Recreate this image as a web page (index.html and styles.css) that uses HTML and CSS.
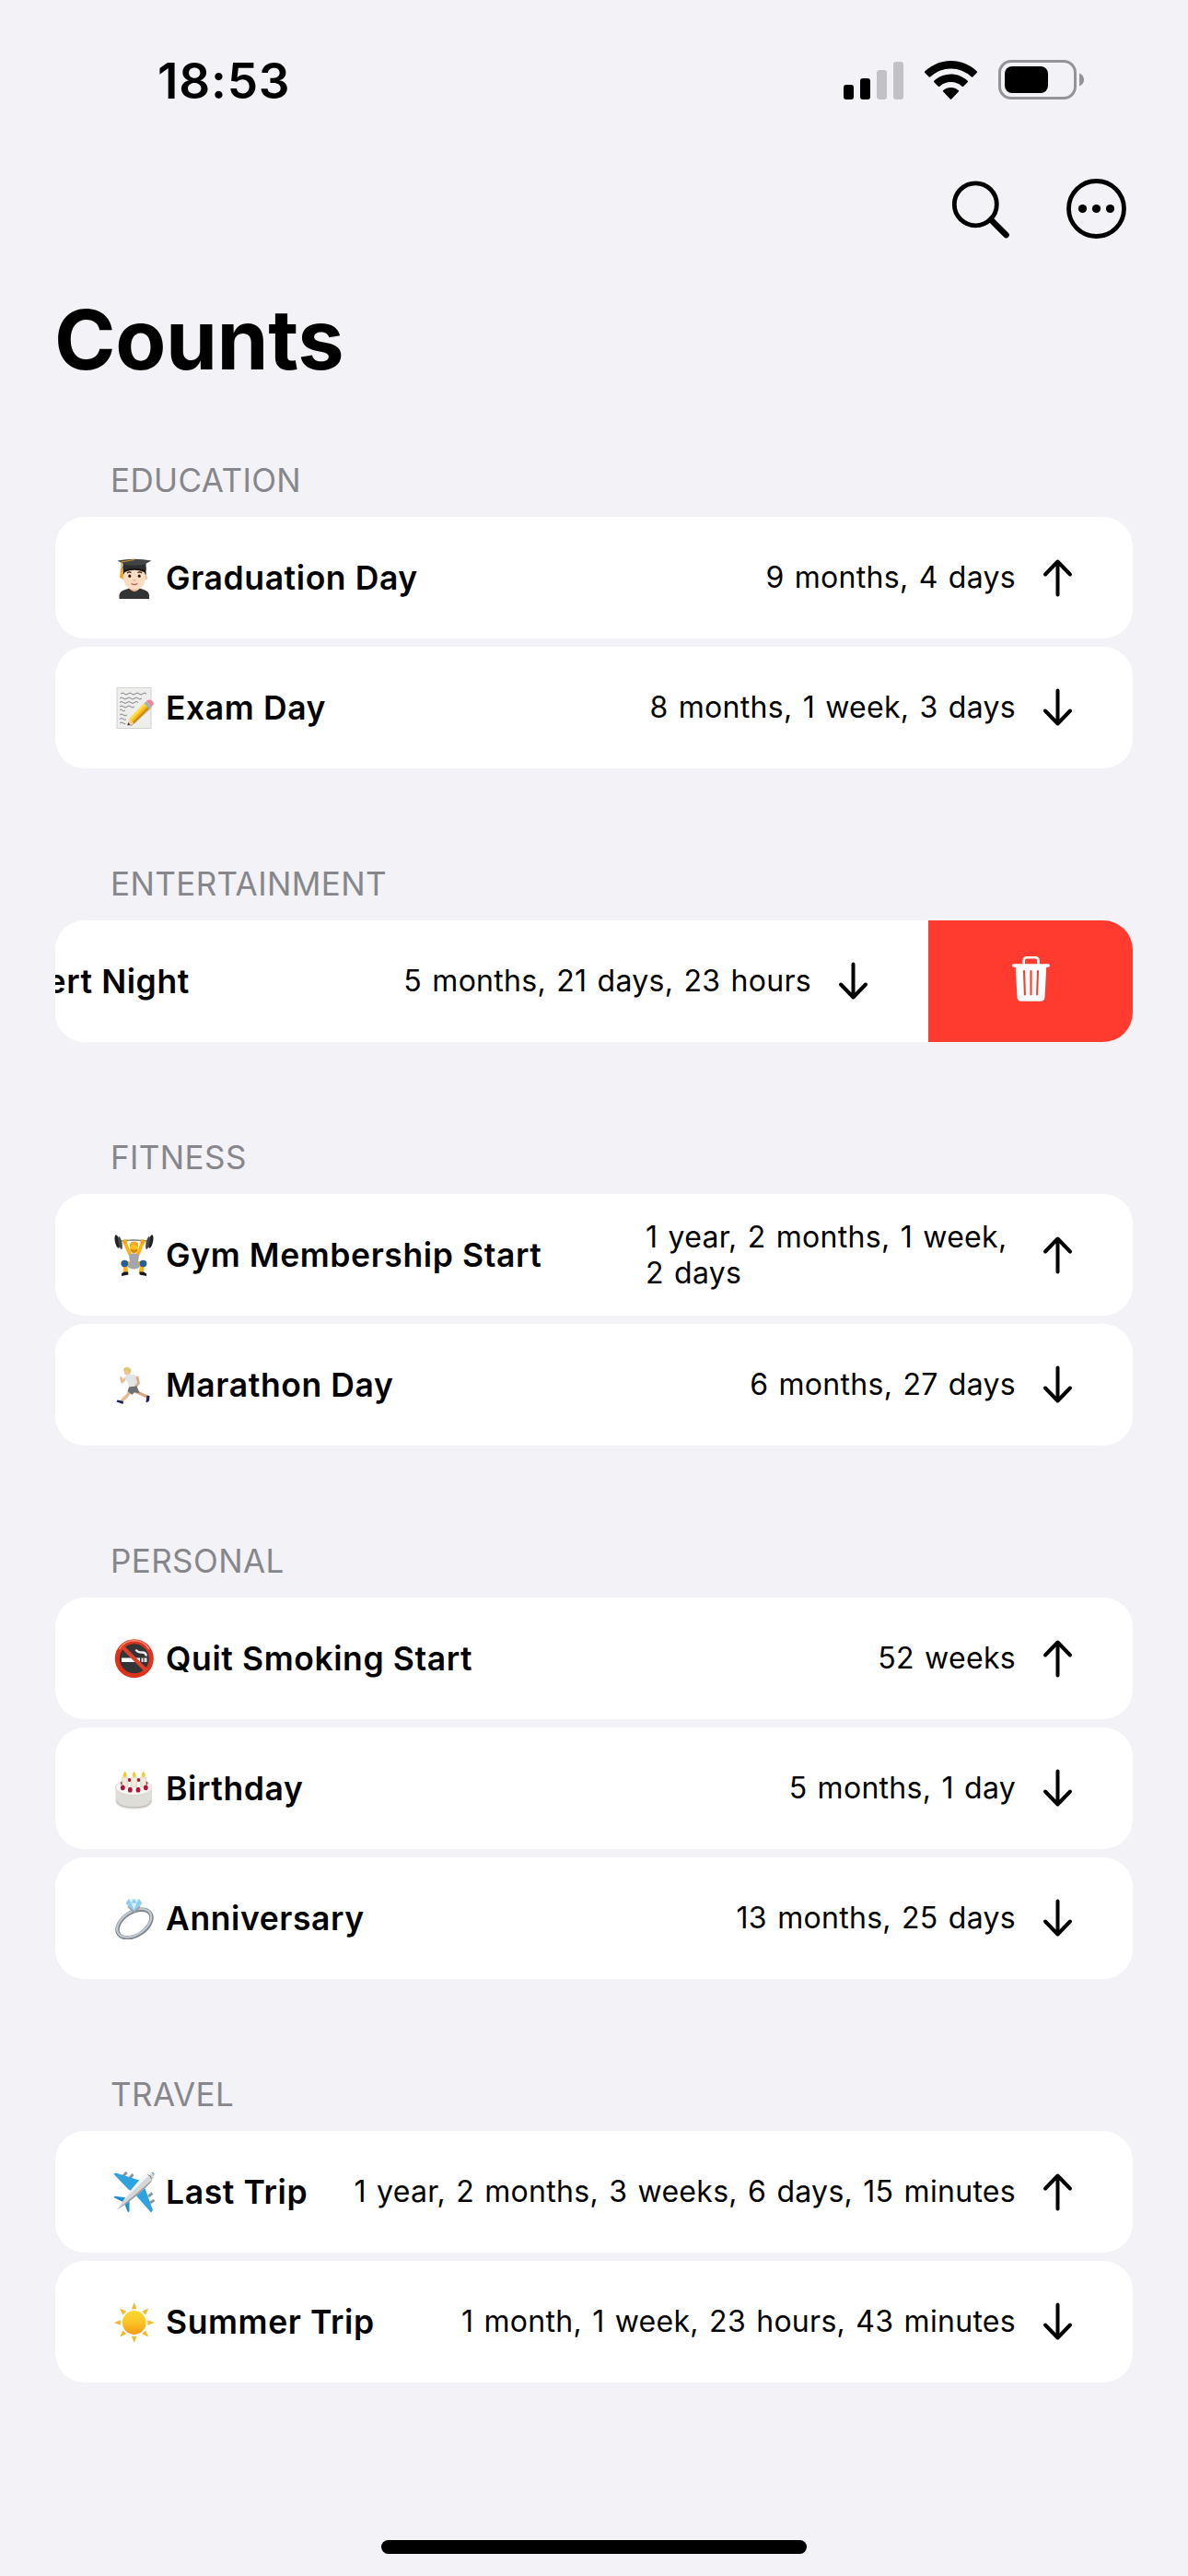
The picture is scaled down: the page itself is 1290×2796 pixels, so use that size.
FILE: index.html
```html
<!DOCTYPE html>
<html lang="en">

<head>
    <meta charset="utf-8" />
    <title>Counts</title>
    <link rel="stylesheet" href="styles.css">
</head>

<body>
    <!-- shared arrows -->
    <svg class="defs" width="0" height="0">
        <symbol id="arrow-up" viewBox="0 0 37 42">
            <path d="M18.5 39.5V4M5 17.5L18.5 3.5L32 17.5" />
        </symbol>
        <symbol id="arrow-down" viewBox="0 0 37 42">
            <path d="M18.5 2.5V38M5 24.5L18.5 38.5L32 24.5" />
        </symbol>
    </svg>

    <div class="status-bar">
        <span class="time">18:53</span>
        <div class="status-icons">
            <svg width="65" height="42" viewBox="0 0 65 42">
                <rect x="0" y="26" width="11" height="16" rx="3" />
                <rect x="18" y="19" width="11" height="23" rx="3" />
                <rect x="36" y="10" width="11" height="32" rx="3" fill="#c2c1c6" />
                <rect x="54" y="1" width="11" height="41" rx="3" fill="#c2c1c6" />
            </svg>
            <svg width="57" height="42" viewBox="0 0 57 42">
                <path d="M28.5 0C39.500 0 49.500 4.300 56.600 11.300Q57.500 12.200 56.700 13L52.300 17.400Q51.500 18.200 50.600 17.300A32 32 0 0 0 6.400 17.300Q5.500 18.200 4.700 17.400L.3 13Q-.5 12.200 .4 11.300C7.500 4.300 17.500 0 28.500 0Z" />
                <path d="M28.500 14.500C35.500 14.500 41.800 17.200 46.500 21.600Q47.400 22.500 46.600 23.300L42.200 27.700Q41.400 28.500 40.500 27.700A17.800 17.800 0 0 0 16.500 27.700Q15.600 28.500 14.800 27.700L10.400 23.300Q9.600 22.500 10.500 21.600C15.200 17.200 21.500 14.500 28.500 14.500Z" />
                <path d="M28.500 29C31.600 29 34.500 30.100 36.700 32Q37.600 32.800 36.800 33.600L29.300 41.400Q28.500 42.200 27.700 41.400L20.200 33.600Q19.400 32.800 20.300 32C22.500 30.100 25.400 29 28.500 29Z" />
            </svg>
            <svg width="93" height="43" viewBox="0 0 93 43">
                <rect x="1.500" y="1.500" width="82" height="40" rx="12.500" fill="none" stroke="#949397" stroke-width="3" />
                <rect x="7" y="7" width="47" height="29" rx="8" />
                <path d="M88 14.500C91.300 15.800 93 18.300 93 21.500S91.300 27.200 88 28.500Z" fill="#949397" />
            </svg>
        </div>
    </div>

    <div class="toolbar">
        <svg width="64" height="64" viewBox="0 0 64 64">
            <circle cx="26.300" cy="26.800" r="23" fill="none" stroke="#000" stroke-width="4.800" />
            <path d="M43 43.500L59.500 60" stroke="#000" stroke-width="6.600" stroke-linecap="round" />
        </svg>
        <svg width="65" height="65" viewBox="0 0 65 65">
            <circle cx="32.500" cy="32.500" r="30" fill="none" stroke="#000" stroke-width="4.800" />
            <circle cx="17.500" cy="32.500" r="4.600" />
            <circle cx="32.500" cy="32.500" r="4.600" />
            <circle cx="47.500" cy="32.500" r="4.600" />
        </svg>
    </div>

    <h1>Counts</h1>

    <section>
        <h2>EDUCATION</h2>
        <div class="card">
            <!-- graduate -->
            <svg class="emoji" viewBox="0 0 45 45">
                <path d="M6.500 45V41Q7 36.500 13 35L19 33H27L33 35Q38.500 36.500 39 41V45Z" fill="#333436" />
                <path d="M17.500 30H28.500V34Q23 40.500 17.500 34Z" fill="#e5b592" />
                <circle cx="11.500" cy="22" r="2.500" fill="#eec3a0" />
                <circle cx="34.500" cy="22" r="2.500" fill="#eec3a0" />
                <path d="M11.500 11H34.500V23Q34 35 23 35Q12 35 11.500 23Z" fill="#fadcc2" />
                <path d="M10.500 10H35.500V20L33.500 16Q23 11.500 12.500 16L10.500 20Z" fill="#1d1713" />
                <path d="M15 17Q17.500 15 19.500 16.500M26.500 16.500Q29 15 31 17" stroke="#2b1b12" stroke-width="1.100" fill="none" />
                <ellipse cx="17.800" cy="20.200" rx="1.500" ry="1.800" fill="#2b1b12" />
                <ellipse cx="28.200" cy="20.200" rx="1.500" ry="1.800" fill="#2b1b12" />
                <path d="M21.500 25H24.500" stroke="#e0a98a" stroke-width="1.400" />
                <path d="M19.500 28.500Q23 30.500 26.500 28.500" stroke="#a8533f" stroke-width="1.300" fill="none" />
                <path d="M10.500 6H35.500V14Q23 9.500 10.500 14Z" fill="#2c2e30" />
                <path d="M4.500 3.500Q23 0 41.500 3.500L34 7.500Q23 10 12 7.500Z" fill="#424548" />
                <path d="M23 2.500L9 5V13" stroke="#d18f24" stroke-width="1.200" fill="none" />
                <path d="M8 12H10.500L11 22Q9 23.500 7 22Z" fill="#eba62f" />
            </svg>
            <span class="name">Graduation Day</span>
            <span class="count">9 months, 4 days</span>
            <svg class="arrow"><use href="#arrow-up" /></svg>
        </div>
        <div class="card">
            <!-- memo -->
            <svg class="emoji" viewBox="0 0 45 45">
                <rect x="4" y=".5" width="37" height="44" fill="#eeeeed" stroke="#d2d2d2" />
                <path d="M8 7q2-2 4 0t4 0 4 0 4 0 4 0 4 0 4 0M7 12q2-2 4 0t4 0 4 0 4 0 4 0 4 0M7 16.500q2-2 4 0t4 0 4 0 4 0 4 0M7 21q2-2 4 0t4 0 4 0 4 0M7 25q1.500-2 3 0t3 0M7 30q2-2 4 0t4 0M7 34.500q2-2 4 0t3 0M7 39q2-2 4 0t2 0" fill="none" stroke="#77777a" stroke-width=".9" />
                <path d="M16.500 42L38 20L44 18L40 24L20 42Z" fill="#000" opacity=".22" />
                <path d="M15.300 41.500L17.500 34L22.500 39.500Z" fill="#edcf9d" />
                <path d="M15.300 41.500L16.200 38.300L18.300 40.600Z" fill="#333" />
                <path d="M17.500 34L33.500 17.500L39 23L22.500 39.500Z" fill="#f8bd19" />
                <path d="M17.500 34L33.500 17.500L35.300 19.300L19.200 36Z" fill="#ffdc4c" />
                <path d="M20.900 37.800L37.200 21.200L39 23L22.500 39.500Z" fill="#d28b10" />
                <path d="M33.500 17.500L36 15L41.500 20.500L39 23Z" fill="#a5b0b8" />
                <path d="M36 15Q38.500 12.500 41.500 14.300T43.500 18.500L41.500 20.500Z" fill="#f08291" />
            </svg>
            <span class="name">Exam Day</span>
            <span class="count">8 months, 1 week, 3 days</span>
            <svg class="arrow"><use href="#arrow-down" /></svg>
        </div>
    </section>

    <section>
        <h2>ENTERTAINMENT</h2>
        <!-- row swiped open -->
        <div class="swipe">
            <div class="card">
                <span class="emoji"></span>
                <span class="name">Concert Night</span>
                <span class="count">5 months, 21 days, 23 hours</span>
                <svg class="arrow"><use href="#arrow-down" /></svg>
            </div>
            <div class="delete">
                <svg width="41" height="49" viewBox="0 0 41 49">
                    <path d="M12.700 9V4.500Q12.700 1.300 16 1.300H25.200Q28.500 1.300 28.500 4.500V9" fill="none" stroke="#fff" stroke-width="2.600" />
                    <rect x="0" y="8.300" width="41" height="3.500" rx="1.700" fill="#fff" />
                    <path d="M3.700 10H37.300L35.500 44.500Q35.200 48.700 31 48.700H10Q5.800 48.700 5.500 44.500Z" fill="#fff" />
                    <path d="M13 16L13.900 41.500M20.500 16V41.500M28 16L27.100 41.500" stroke="#ff3b30" stroke-width="2.100" stroke-linecap="round" />
                </svg>
            </div>
        </div>
    </section>

    <section>
        <h2>FITNESS</h2>
        <div class="card">
            <!-- weight lifter -->
            <svg class="emoji" viewBox="0 0 45 45">
                <path d="M5 7.500Q22 4.500 40 7.500" stroke="#777b80" stroke-width="1.300" fill="none" />
                <path d="M12.500 8.500L18.500 22M32 8.500L26.500 22" stroke="#fbb414" stroke-width="3.800" stroke-linecap="round" />
                <ellipse cx="4.300" cy="7.500" rx="2.400" ry="7.400" transform="rotate(-12 4.300 7.500)" fill="#202326" />
                <ellipse cx="7.500" cy="9" rx="1.900" ry="7.200" transform="rotate(-12 7.500 9)" fill="#44484c" />
                <ellipse cx="40.700" cy="7.500" rx="2.400" ry="7.400" transform="rotate(12 40.700 7.500)" fill="#202326" />
                <ellipse cx="37.500" cy="9" rx="1.900" ry="7.200" transform="rotate(12 37.500 9)" fill="#44484c" />
                <circle cx="12.700" cy="7.800" r="2.500" fill="#f2a611" />
                <circle cx="32" cy="7.800" r="2.500" fill="#f2a611" />
                <path d="M20 32L12.500 31L14 42M25 32L32 31L30 42" stroke="#fbb414" stroke-width="4.800" fill="none" stroke-linejoin="round" />
                <path d="M17 22Q22.500 18.500 28 22L27 30L29 35Q22.500 40 15.500 35L18 30Z" fill="#a4a6aa" />
                <ellipse cx="22.400" cy="14" rx="4.400" ry="5.800" fill="#fcc21b" />
                <path d="M18 14Q16.500 8 22.500 7.500T27 14Q25 10.500 22 11T18 14Z" fill="#f5a623" />
                <path d="M18.500 15.500Q22.500 17.500 26.500 15.500Q26 20 22.500 20T18.500 15.500Z" fill="#d9860c" />
                <ellipse cx="12.300" cy="31.500" rx="3.900" ry="3.700" fill="#285f9a" />
                <ellipse cx="32.500" cy="31.500" rx="3.900" ry="3.700" fill="#285f9a" />
                <path d="M11.500 40.500H16L16.500 43.500L9 45V42.500ZM28.500 40.500H33L36 42.500V45L28.500 43.500Z" fill="#17191c" />
            </svg>
            <span class="name">Gym Membership Start</span>
            <span class="count multi">1 year, 2 months, 1 week, 2 days</span>
            <svg class="arrow"><use href="#arrow-up" /></svg>
        </div>
        <div class="card">
            <!-- runner -->
            <svg class="emoji" viewBox="0 0 45 45">
                <path d="M26 30L35.500 34.500" stroke="#dba87f" stroke-width="3.400" stroke-linecap="round" />
                <path d="M18.500 29L14.500 34.500L9 39.500" stroke="#e9ba92" stroke-width="3.600" stroke-linecap="round" fill="none" />
                <path d="M15 13.500L9.500 19L8.300 14.500" stroke="#e9ba92" stroke-width="2.600" stroke-linecap="round" stroke-linejoin="round" fill="none" />
                <path d="M14 11.500Q22 9 26.500 14L25.500 25L17 26.500Q17 19 12.500 16Z" fill="#e2e3e7" />
                <path d="M26 14L27.500 20L24 24.500" stroke="#dba87f" stroke-width="2.700" stroke-linecap="round" stroke-linejoin="round" fill="none" />
                <path d="M17 24.500L25.500 23.500L28.500 31L22.500 30.500L20.500 33L15.500 29Z" fill="#6d6f73" />
                <ellipse cx="15" cy="7.500" rx="3.400" ry="4" fill="#f0c6a0" />
                <path d="M11 6.500Q10.500 3 15 3T19.300 6.500Q19.300 10 17.500 11Q17 7 11 6.500Z" fill="#ddca77" />
                <path d="M4.500 38.500L11 40L10.500 43L3.500 40.500ZM36.500 33.500L39.500 34L39 39.500L36 41.500L35.500 40Z" fill="#1c2463" />
            </svg>
            <span class="name">Marathon Day</span>
            <span class="count">6 months, 27 days</span>
            <svg class="arrow"><use href="#arrow-down" /></svg>
        </div>
    </section>

    <section>
        <h2>PERSONAL</h2>
        <div class="card">
            <!-- no smoking -->
            <svg class="emoji" viewBox="0 0 45 45">
                <circle cx="22.800" cy="22.200" r="18.500" fill="#333436" stroke="#dd321b" stroke-width="5" />
                <path d="M6.500 12A19 19 0 0 1 39 12" fill="none" stroke="#f28a75" stroke-width="1.500" />
                <rect x="9" y="21.500" width="20" height="4.500" fill="#fff" />
                <path d="M30.500 21.500H32.500V26H30.500ZM33.500 21.500H36.500V26H33.500Z" fill="#e2e2e2" />
                <path d="M35.500 19.500Q36 15.500 31 15.500T24.500 12.500" fill="none" stroke="#eee" stroke-width="2.500" />
                <path d="M9.500 9L36 35.500" stroke="#dc4029" stroke-width="4.200" />
            </svg>
            <span class="name">Quit Smoking Start</span>
            <span class="count">52 weeks</span>
            <svg class="arrow"><use href="#arrow-up" /></svg>
        </div>
        <div class="card">
            <!-- cake -->
            <svg class="emoji" viewBox="0 0 45 45">
                <path d="M2.500 21V37Q5 44.500 22.500 44.500T42 37V21Z" fill="#dfddd8" />
                <path d="M3.500 35.500Q6 42.800 22.500 42.800T41 35.500" stroke="#bbb8b0" stroke-width="1" fill="none" />
                <ellipse cx="22.300" cy="21" rx="19.900" ry="8.600" fill="#f7f6f3" stroke="#d4d1cb" stroke-width=".8" />
                <circle cx="10" cy="16.500" r="1.900" fill="#a51439" />
                <circle cx="17.500" cy="13" r="2" fill="#a51439" />
                <circle cx="27.500" cy="13" r="2" fill="#a51439" />
                <circle cx="35.500" cy="16.500" r="1.900" fill="#a51439" />
                <path d="M9.700 10H15.700V20Q12.700 22 9.700 20ZM19.700 10H25.700V20Q22.700 22 19.700 20ZM29.700 10H35.700V20Q32.700 22 29.700 20Z" fill="#eeebdb" stroke="#ccc8b5" stroke-width=".6" />
                <path d="M12.700 3.500Q17 9 12.700 10.300Q8.400 9 12.700 3.500ZM22.700 3.500Q27 9 22.700 10.300Q18.400 9 22.700 3.500ZM32.700 3.500Q37 9 32.700 10.300Q28.400 9 32.700 3.500Z" fill="#f0cd3c" />
                <ellipse cx="10.300" cy="21.300" rx="2.400" ry="2.900" fill="#b80f3b" />
                <ellipse cx="18.300" cy="23.700" rx="2.400" ry="2.900" fill="#b80f3b" />
                <ellipse cx="27" cy="23.700" rx="2.400" ry="2.900" fill="#b80f3b" />
                <ellipse cx="35.300" cy="21.300" rx="2.400" ry="2.900" fill="#b80f3b" />
            </svg>
            <span class="name">Birthday</span>
            <span class="count">5 months, 1 day</span>
            <svg class="arrow"><use href="#arrow-down" /></svg>
        </div>
        <div class="card">
            <!-- ring -->
            <svg class="emoji" viewBox="0 0 45 45">
                <ellipse cx="23" cy="28" rx="20.500" ry="12.500" transform="rotate(-33 23 28)" fill="none" stroke="#7d858d" stroke-width="4.400" />
                <ellipse cx="22.700" cy="27.300" rx="20.500" ry="12.500" transform="rotate(-33 22.700 27.300)" fill="none" stroke="#c3cad1" stroke-width="2.200" />
                <path d="M16 9L22.500 15.500L29 9" stroke="#9ba3ab" stroke-width="2" fill="none" />
                <path d="M16.500 1H28L31.500 6L22.500 13.500L13.500 6Z" fill="#8ecdf6" />
                <path d="M16.500 1L19.500 5.500L22.500 1L25.500 5.500L28 1ZM19.500 5.500L22.500 13L25.500 5.500Z" fill="#d6f0ff" />
            </svg>
            <span class="name">Anniversary</span>
            <span class="count">13 months, 25 days</span>
            <svg class="arrow"><use href="#arrow-down" /></svg>
        </div>
    </section>

    <section>
        <h2>TRAVEL</h2>
        <div class="card">
            <!-- airplane -->
            <svg class="emoji" viewBox="0 0 45 45">
                <path d="M11 5L14.500 .8M18 7L21.500 3M38 27L42.500 23.500M40 34L44.500 31" stroke="#909498" stroke-width="3" />
                <path d="M.3 2.500L3 1.500L30 10L34 17L43 42L41 44.500L22 23L16 19Z" fill="#2ea3e0" />
                <path d="M.3 28L2 26.800L15 28.500L17.500 31L17.500 43L16 44.500L11.500 33.500Z" fill="#1d91d0" />
                <path d="M4 41.500L10.500 32Q20 18 33 4.500Q39 -.5 44 .7Q46 5 41 11.500Q29 24 14 35Z" fill="#d4d6d8" />
                <path d="M10.500 32Q20 18 33 4.500Q39 -.5 42 1.500Q27 15 10.500 32Z" fill="#f4f5f5" />
                <path d="M4 41.500L14 35Q29 24 41 11.500L42 9Q28 22 4 41.500Z" fill="#9b9da0" />
                <path d="M37.500 3.500Q41 4 41.500 8" fill="none" stroke="#777" stroke-width="1" />
                <path d="M41.500 1Q44.800 1 44.500 4Z" fill="#2ea3e0" />
            </svg>
            <span class="name">Last Trip</span>
            <span class="count">1 year, 2 months, 3 weeks, 6 days, 15 minutes</span>
            <svg class="arrow"><use href="#arrow-up" /></svg>
        </div>
        <div class="card">
            <!-- sun -->
            <svg class="emoji" viewBox="0 0 45 45">
                <defs>
                    <linearGradient id="sun" x1="0" y1="0" x2="0" y2="1">
                        <stop offset="0" stop-color="#fcd92f" />
                        <stop offset=".5" stop-color="#fcc425" />
                        <stop offset="1" stop-color="#f39a16" />
                    </linearGradient>
                    <path id="ray" d="M22.700 1L25.500 8.300H19.900Z" />
                </defs>
                <circle cx="22.700" cy="23" r="12.900" fill="url(#sun)" />
                <g fill="#f6b92a">
                    <use href="#ray" />
                    <use href="#ray" transform="rotate(45 22.700 23)" />
                    <use href="#ray" transform="rotate(90 22.700 23)" />
                    <use href="#ray" transform="rotate(135 22.700 23)" />
                    <use href="#ray" transform="rotate(180 22.700 23)" />
                    <use href="#ray" transform="rotate(225 22.700 23)" />
                    <use href="#ray" transform="rotate(270 22.700 23)" />
                    <use href="#ray" transform="rotate(315 22.700 23)" />
                </g>
            </svg>
            <span class="name">Summer Trip</span>
            <span class="count">1 month, 1 week, 23 hours, 43 minutes</span>
            <svg class="arrow"><use href="#arrow-down" /></svg>
        </div>
    </section>

    <div class="home-indicator"></div>
</body>

</html>
```
FILE: styles.css
```css
* {
    box-sizing: border-box;
}

body {
    margin: 0;
    height: 2796px;
    display: flex;
    flex-direction: column;
    background-color: #f2f2f7;
    color: #000;
    font-family: Inter, "Liberation Sans", sans-serif;
    overflow: hidden;
}

.defs {
    position: absolute;
}

.status-bar {
    height: 173px;
    padding: 0 113px 0 171px;
    display: flex;
    align-items: center;
    justify-content: space-between;
}

.time {
    padding-top: 3px;
    font-size: 53px;
    font-weight: 600;
    line-height: 60px;
    letter-spacing: 0.8px;
}

.status-icons {
    display: flex;
    gap: 23px;
    align-items: center;
}

.toolbar {
    height: 107px;
    padding-right: 67px;
    display: flex;
    gap: 61px;
    align-items: center;
    justify-content: flex-end;
}

h1 {
    margin: 34px 0 0 59px;
    font-size: 90px;
    font-weight: 700;
    line-height: 110px;
    letter-spacing: -0.4px;
}

section {
    padding: 0 60px;
    margin-bottom: 66px;
    display: flex;
    flex-direction: column;
    gap: 9px;
}

h1 + section {
    margin-top: 38px;
}

h2 {
    margin: 0;
    padding: 39px 0 0 60px;
    height: 90px;
    font-size: 35px;
    font-weight: 400;
    line-height: 40px;
    letter-spacing: 0.4px;
    color: #87868b;
}

.card {
    height: 132px;
    padding: 0 63px;
    display: flex;
    align-items: center;
    background-color: #fff;
    border-radius: 32px;
    flex-shrink: 0;
}

.emoji {
    width: 45px;
    height: 45px;
    margin-right: 12px;
    flex-shrink: 0;
}

.name {
    font-size: 35.5px;
    font-weight: 600;
    letter-spacing: 0.6px;
    white-space: nowrap;
}

.count {
    margin-left: auto;
    padding-bottom: 1px;
    font-size: 32px;
    line-height: 39px;
    letter-spacing: 0.3px;
    word-spacing: 1.9px;
    white-space: nowrap;
}

.multi {
    width: 402px;
    white-space: normal;
}

.arrow {
    width: 37px;
    height: 42px;
    margin-left: 27px;
    fill: none;
    stroke: #000;
    stroke-width: 4;
    stroke-linecap: round;
    stroke-linejoin: round;
}

.swipe {
    display: flex;
    border-radius: 32px;
    background-color: #fff;
    overflow: hidden;
}

.swipe .card {
    width: 1170px;
    margin-left: -222px;
    border-radius: 0;
}

.delete {
    width: 222px;
    display: flex;
    align-items: center;
    justify-content: center;
    padding-bottom: 5px;
    flex-shrink: 0;
    background-color: #ff3b30;
}

.home-indicator {
    width: 462px;
    height: 15px;
    margin: auto auto 24px;
    border-radius: 8px;
    background-color: #000;
}
```
